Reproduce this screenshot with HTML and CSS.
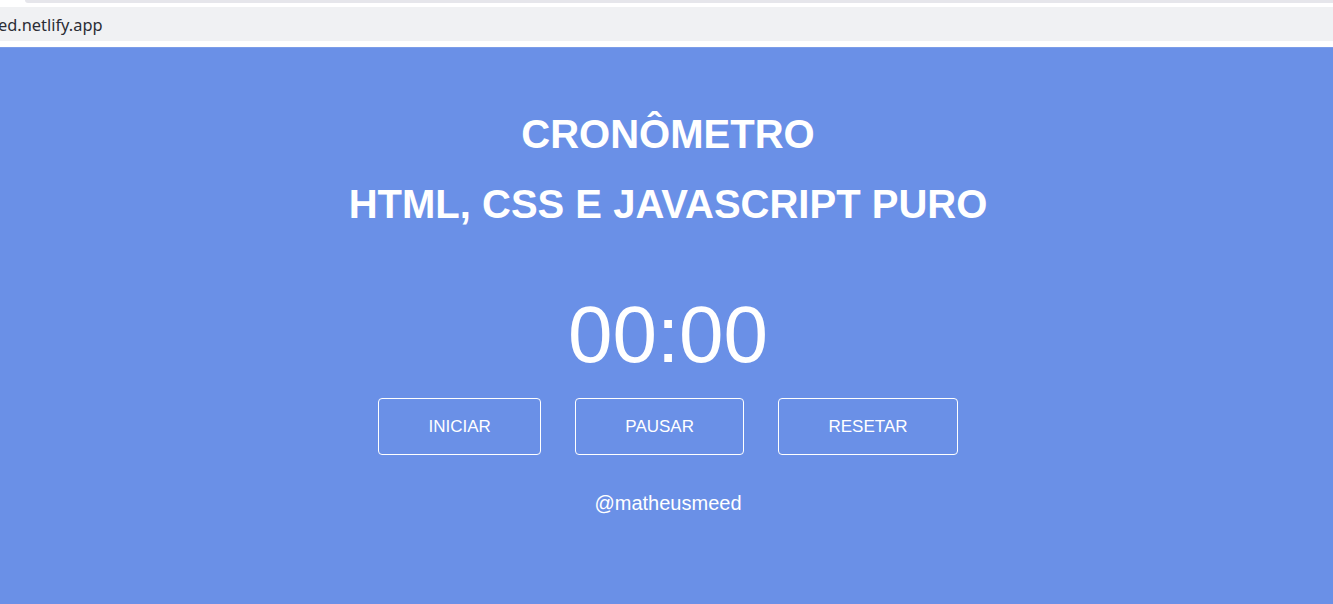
FILE: index.html
```html
<!DOCTYPE html>
<html lang="pt-BR">
<head>
<meta charset="utf-8">
<title>Cronômetro</title>
<link rel="stylesheet" href="styles.css">
</head>
<body>
<div class="chrome">
  <div class="tabstrip"><div class="tab-edge"></div></div>
  <div class="addressbar"><span class="url">ed.netlify.app</span></div>
</div>
<main class="app">
  <h1 class="title">CRONÔMETRO</h1>
  <h1 class="title second">HTML, CSS E JAVASCRIPT PURO</h1>
  <div class="timer">00:00</div>
  <div class="buttons">
    <button class="btn">INICIAR</button>
    <button class="btn">PAUSAR</button>
    <button class="btn">RESETAR</button>
  </div>
  <p class="handle">@matheusmeed</p>
</main>
</body>
</html>
```
FILE: styles.css
```css
html, body {
  margin: 0;
  padding: 0;
  height: 100%;
  overflow: hidden;
}
body {
  background: #ffffff;
  font-family: "Liberation Sans", Arial, sans-serif;
}
.chrome {
  height: 47px;
  background: #ffffff;
  display: flex;
  flex-direction: column;
}
.tabstrip {
  height: 7px;
  display: flex;
}
.tab-edge {
  margin-left: 25px;
  flex: 1;
  height: 3px;
  background: #e6e6eb;
  border-bottom-left-radius: 4px;
}
.addressbar {
  height: 34px;
  background: #f0f1f3;
  display: flex;
  align-items: center;
}
.url {
  margin-left: -2px;
  font-family: "Noto Sans", "Open Sans", sans-serif;
  font-size: 16.4px;
  color: #2b2d35;
}
.app {
  height: 557px;
  background: #6a90e7;
  border-top: 1px solid #7c9de8;
  box-sizing: border-box;
  display: flex;
  flex-direction: column;
  align-items: center;
  color: #ffffff;
  padding-top: 62px;
  padding-left: 3px;
}
.title {
  margin: 0;
  font-size: 40px;
  line-height: 48px;
  font-weight: bold;
}
.title.second {
  margin-top: 22px;
}
.timer {
  margin-top: 61px;
  font-size: 80px;
  line-height: 92px;
}
.buttons {
  margin-top: 17px;
  display: flex;
  gap: 33.5px;
}
.btn {
  height: 57px;
  padding: 0 49.5px;
  background: transparent;
  border: 1px solid #ffffff;
  border-radius: 4px;
  color: #ffffff;
  font-family: "Liberation Sans", Arial, sans-serif;
  font-size: 17px;
  cursor: pointer;
}
.handle {
  margin: 36px 0 0;
  font-size: 20px;
  line-height: 24px;
}
```
